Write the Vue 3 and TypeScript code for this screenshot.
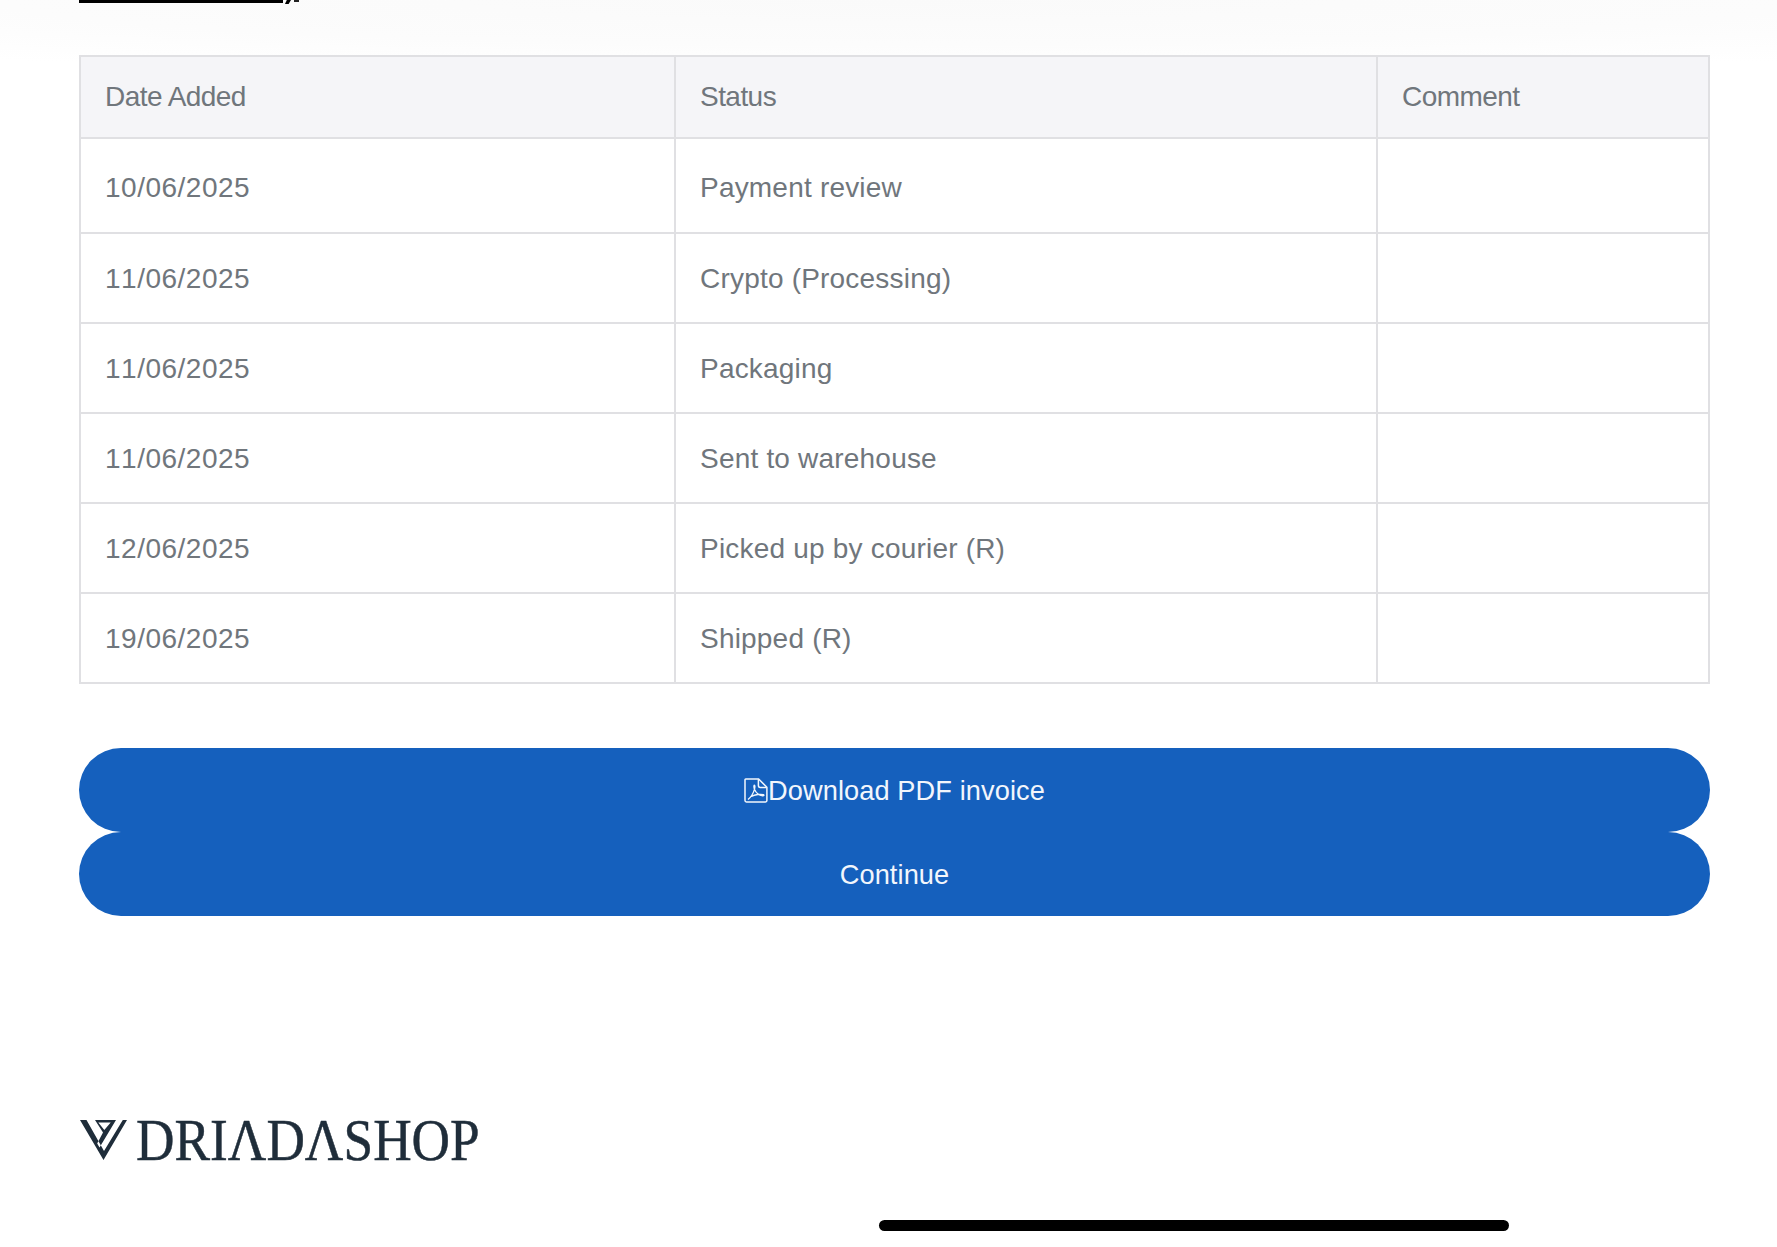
<script setup lang="ts">
interface Row { date: string; status: string; comment: string }
const rows: Row[] = [
  { date: '10/06/2025', status: 'Payment review', comment: '' },
  { date: '11/06/2025', status: 'Crypto (Processing)', comment: '' },
  { date: '11/06/2025', status: 'Packaging', comment: '' },
  { date: '11/06/2025', status: 'Sent to warehouse', comment: '' },
  { date: '12/06/2025', status: 'Picked up by courier (R)', comment: '' },
  { date: '19/06/2025', status: 'Shipped (R)', comment: '' },
]
</script>

<template>
  <div class="page">
    <div class="sliver">
      <span class="sliver-line"></span>
      <span class="sliver-mark"></span>
      <span class="sliver-dot"></span>
    </div>

    <table class="history">
      <colgroup>
        <col class="c1" />
        <col class="c2" />
        <col class="c3" />
      </colgroup>
      <thead>
        <tr>
          <th>Date Added</th>
          <th>Status</th>
          <th>Comment</th>
        </tr>
      </thead>
      <tbody>
        <tr v-for="(row, i) in rows" :key="i" :class="{ first: i === 0 }">
          <td class="date">{{ row.date }}</td>
          <td>{{ row.status }}</td>
          <td>{{ row.comment }}</td>
        </tr>
      </tbody>
    </table>

    <div class="actions">
      <a class="btn">
        <svg class="pdf" viewBox="0 0 24 25" width="24" height="25" fill="none" stroke="currentColor" stroke-width="1.5">
          <path d="M1.7 1H14.6L22.9 9.3V22.6Q22.9 24 21.5 24H2.4Q1 24 1 22.6V1.7Q1 1 1.7 1Z" />
          <path d="M14.4 1.2V7.6Q14.4 9.4 16.2 9.4H22.7" />
          <path d="M4 21.5C7.5 18.6 9.6 14.4 10.6 10.8 11.1 8.8 11 7.2 10.4 7.2 9.6 7.2 9.8 9.6 10.6 11.6 11.8 14.4 15 17.4 18.6 17.8 20 17.9 20.4 17.1 19.4 16.7 16.8 15.9 11 16.4 7.4 18.4" stroke-width="1.3" />
        </svg>
        <span>Download PDF invoice</span>
      </a>
      <a class="btn"><span>Continue</span></a>
    </div>

    <div class="logo">
      <svg class="mark" viewBox="0 0 47 40" width="47" height="40">
        <path fill="#1f2d3a" fill-rule="evenodd" d="M0 0H6.5L24 31 42.8 0H47L23.5 40ZM15 0H36L19.5 27.5 17.2 23.6 23 12.5ZM18.3 2.5L24.3 10 30.7 2.5Z" />
      </svg>
      <span class="wordmark">DRIΛDΛSHOP</span>
    </div>

    <div class="home-indicator"></div>
  </div>
</template>

<style scoped>
.page {
  position: relative;
  width: 1777px;
  height: 1247px;
  overflow: hidden;
  box-sizing: border-box;
  padding-left: 79px;
  background:
    radial-gradient(ellipse 1500px 75px at 900px 0, #fafafa 0%, #fcfcfc 60%, #ffffff 100%),
    #ffffff;
  background-repeat: no-repeat;
  font-family: "Liberation Sans", Arial, sans-serif;
}
.sliver {
  display: flex;
  align-items: flex-start;
  height: 55px;
}
.sliver-line {
  display: block;
  width: 204px;
  height: 3px;
  background: #000;
}
.sliver-mark {
  display: block;
  width: 6px;
  height: 4px;
  margin-left: 2px;
  background: #000;
  clip-path: polygon(30% 0, 100% 0, 60% 100%, 0 100%);
}
.sliver-dot {
  display: block;
  width: 5px;
  height: 2px;
  margin-left: 3px;
  background: #222;
}
.history {
  width: 1629px;
  table-layout: fixed;
  border-collapse: collapse;
  font-size: 28px;
  color: #70767c;
}
.c1 { width: 595px; }
.c2 { width: 702px; }
.c3 { width: 332px; }
th, td {
  border: 2px solid #e0e0e3;
  padding: 0 24px;
  text-align: left;
  font-weight: 400;
}
th {
  height: 80px;
  background: #f5f5f8;
  letter-spacing: -0.55px;
}
td {
  height: 86px;
  padding-top: 2px;
  letter-spacing: 0.2px;
}
td.date { letter-spacing: 0.5px; font-kerning: none; }
tr.first td { height: 89px; padding-top: 4px; }
.actions {
  display: flex;
  flex-direction: column;
  width: 1631px;
  margin-top: 64px;
}
.btn {
  display: flex;
  align-items: center;
  justify-content: center;
  box-sizing: border-box;
  height: 84px;
  padding-top: 2px;
  border-radius: 42px;
  background: #1560bd;
  color: #f2f6fc;
  font-size: 27.2px;
  letter-spacing: 0.1px;
}
.pdf { display: block; flex: none; margin-top: -1px; }
.logo {
  display: flex;
  align-items: center;
  gap: 9px;
  margin-top: 199px;
  height: 50px;
  padding-left: 1px;
}
.mark { display: block; flex: none; }
.wordmark {
  font-family: "Liberation Serif", "Times New Roman", serif;
  font-size: 60px;
  line-height: 50px;
  transform: scaleX(0.888);
  transform-origin: left center;
  color: #1f2d3a;
  -webkit-text-stroke: 0.5px #1f2d3a;
}
.home-indicator {
  width: 630px;
  height: 11px;
  margin: 55px 0 0 800px;
  border-radius: 6px;
  background: #000;
}
</style>
